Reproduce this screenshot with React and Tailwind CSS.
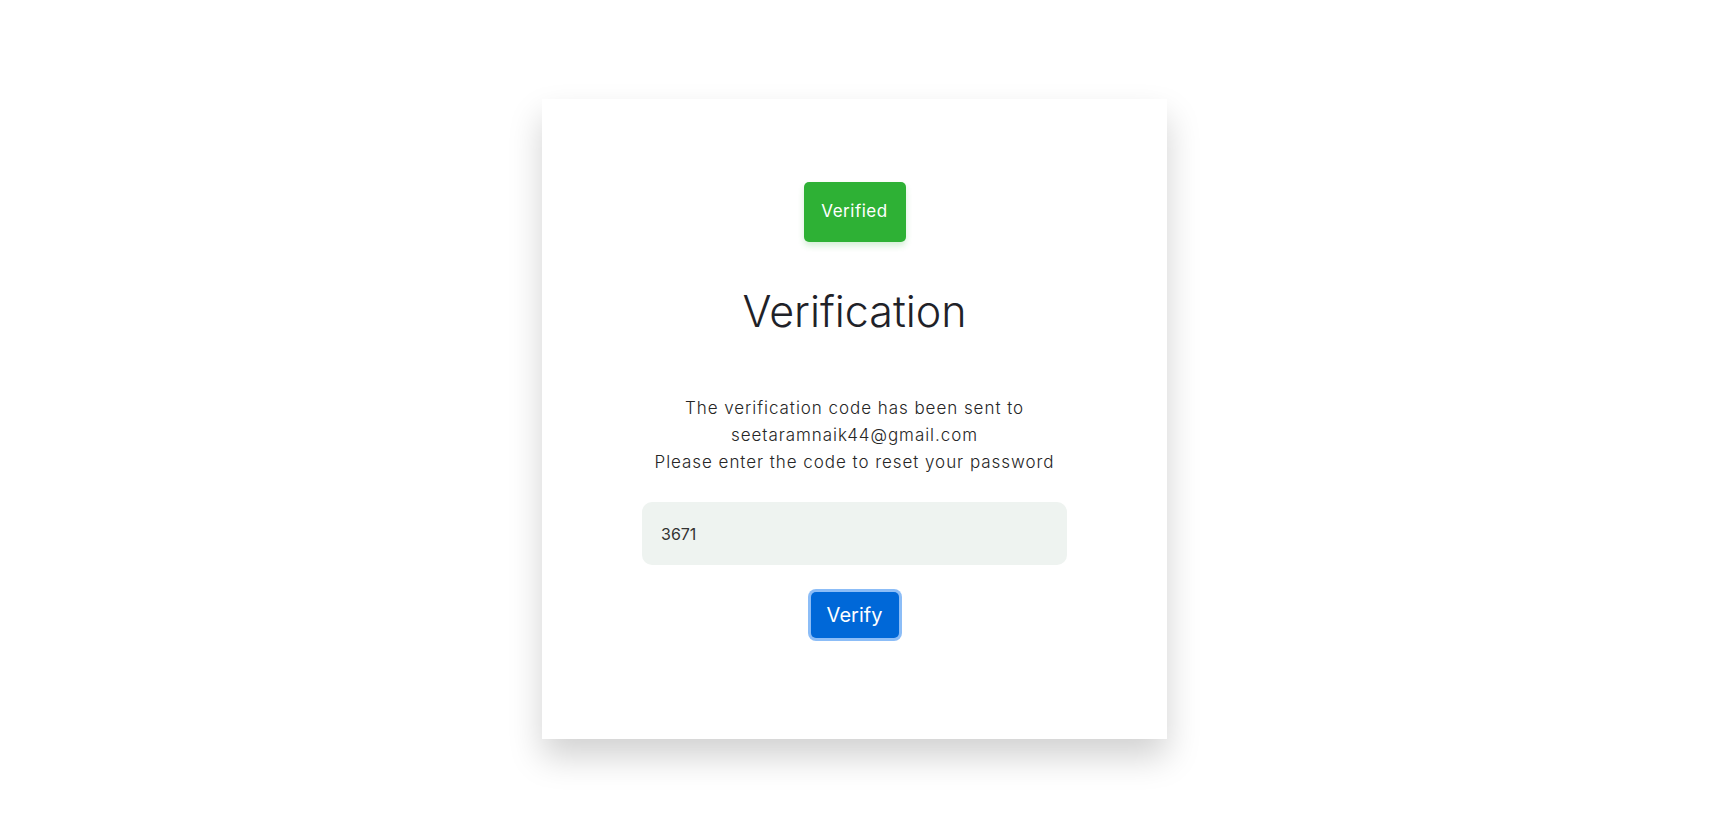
import { useState } from "react";

export default function App() {
    const [code, setCode] = useState("3671");

    return (
        <div className="min-h-screen bg-white flex justify-center pr-4 pt-[99px]" style={{ fontFamily: "Inter, 'Open Sans', sans-serif" }}>
            <div className="w-[625px] h-[640px] bg-white shadow-[0_18px_32px_rgba(0,0,0,0.18)] flex flex-col items-center pt-[83px]">
                <div className="w-[102px] h-[60px] rounded-[5px] bg-[#2eb135] text-white text-[17px] tracking-[0.5px] flex items-center justify-center shadow-[0_4px_6px_rgba(46,177,53,0.2)]">
                    Verified
                </div>

                <h1 className="mt-[44px] text-[43px] leading-[50px] font-light text-[#1f2228]">Verification</h1>

                <p className="mt-[59px] text-center text-[17px] tracking-[0.95px] leading-[27px] font-light text-[#262626]">
                    The verification code has been sent to
                    <br />
                    seetaramnaik44@gmail.com
                    <br />
                    Please enter the code to reset your password
                </p>

                <input
                    className="mt-[26px] w-[425px] h-[63px] rounded-[10px] bg-[#eef3f0] px-[19px] text-[16px] text-[#333] outline-none"
                    value={code}
                    onChange={(e) => setCode(e.target.value)}
                />

                <button className="mt-[27px] w-[88px] h-[46px] rounded-[5px] bg-[#0068d8] text-white text-[20px] ring-[3px] ring-[#8cbdf7]">
                    Verify
                </button>
            </div>
        </div>
    );
}
